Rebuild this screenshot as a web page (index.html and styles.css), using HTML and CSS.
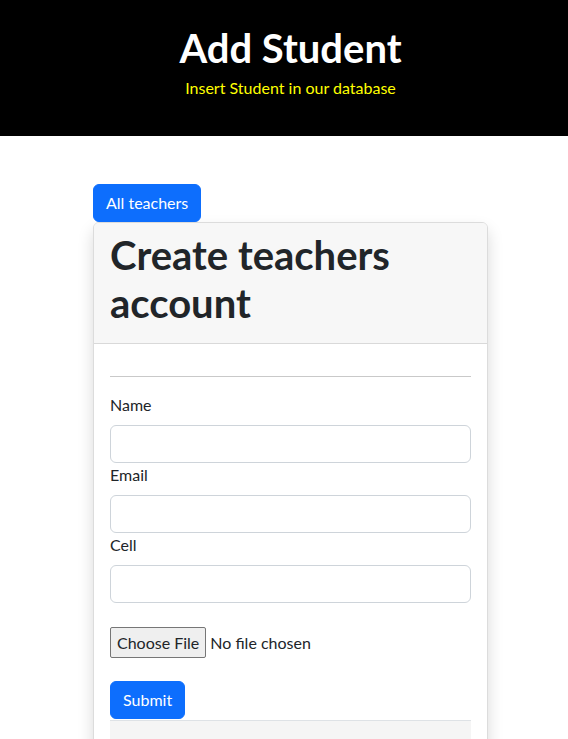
FILE: index.html
```html
<!DOCTYPE html>
<html lang="en">
<head>
<meta charset="utf-8">
<title>Add Student</title>
<link rel="stylesheet" href="styles.css">
</head>
<body>
<header class="hero">
  <h1 class="hero-title">Add Student</h1>
  <p class="hero-sub">Insert Student in our database</p>
</header>
<main class="main">
  <a class="btn btn-primary" href="#">All teachers</a>
  <section class="card">
    <div class="card-header">
      <h1 class="card-title">Create teachers account</h1>
    </div>
    <div class="card-body">
      <hr class="divider">
      <form class="form">
        <label class="form-label" for="name">Name</label>
        <input class="form-control" id="name" type="text">
        <label class="form-label" for="email">Email</label>
        <input class="form-control" id="email" type="text">
        <label class="form-label" for="cell">Cell</label>
        <input class="form-control" id="cell" type="text">
        <div class="file-row"><input class="file-input" type="file"></div>
        <div class="submit-row"><button class="btn btn-primary" type="button">Submit</button></div>
      </form>
      <div class="list-box">
        <h2 class="list-title">All Teachers</h2>
      </div>
    </div>
  </section>
</main>
</body>
</html>
```
FILE: styles.css
```css
* { box-sizing: border-box; }
html, body { margin: 0; padding: 0; }
body {
  font-family: "Lato", "Noto Sans", sans-serif;
  font-size: 16px;
  line-height: 24px;
  color: #212529;
  background: #fff;
}
.hero {
  background: #000;
  text-align: center;
  padding: 24px 0 36px 13px;
}
.hero-title {
  margin: 0 0 4px;
  font-size: 40px;
  line-height: 48px;
  font-weight: 700;
  color: #fff;
}
.hero-sub {
  margin: 0;
  color: #ffff00;
  font-size: 16px;
  line-height: 24px;
}
.main {
  width: 395px;
  margin: 48px 0 0 93px;
}
.btn {
  display: inline-block;
  font-family: inherit;
  font-size: 16px;
  line-height: 24px;
  padding: 6px 12px;
  border: 1px solid transparent;
  border-radius: 6px;
  text-decoration: none;
  cursor: pointer;
}
.btn-primary {
  background: #0d6efd;
  border-color: #0d6efd;
  color: #fff;
}
.card {
  border: 1px solid #dcdcdc;
  border-radius: 6px;
  box-shadow: 0 8px 16px rgba(0,0,0,0.15);
  background: #fff;
  overflow: hidden;
}
.card-header {
  background: #f7f7f7;
  border-bottom: 1px solid #d9d9d9;
  padding: 8px 16px;
}
.card-title {
  margin: 0 0 8px;
  font-size: 40px;
  line-height: 48px;
  font-weight: 700;
}
.card-body {
  padding: 16px 16px 0;
}
.divider {
  margin: 16px 0;
  border: 0;
  border-top: 1px solid #c9c9c9;
}
.form { display: flex; flex-direction: column; align-items: flex-start; }
.form-label {
  display: block;
  margin-bottom: 8px;
}
.form-control {
  display: block;
  width: 100%;
  height: 38px;
  padding: 6px 12px;
  font-family: inherit;
  font-size: 16px;
  border: 1px solid #ced4da;
  border-radius: 6px;
  background: #fff;
}
.file-row { margin-top: 24px; }
.file-input {
  font-family: inherit;
  font-size: 16px;
  line-height: 21px;
  color: #212529;
}
.file-input::file-selector-button {
  font-family: inherit;
  font-size: 16px;
  line-height: 21px;
  padding: 4px 6px;
  margin-right: 4px;
  background: #efefef;
  border: 1px solid #767676;
  border-radius: 2px;
  color: #212529;
}
.submit-row { margin-top: 23px; }
.list-box {
  margin-top: 1px;
  background: #f5f5f5;
  border-top: 1px solid #dee2e6;
  padding: 11px 8px 12px;
  text-align: center;
}
.list-title {
  margin: 0;
  font-size: 32px;
  line-height: 38px;
  font-weight: 700;
}
```
